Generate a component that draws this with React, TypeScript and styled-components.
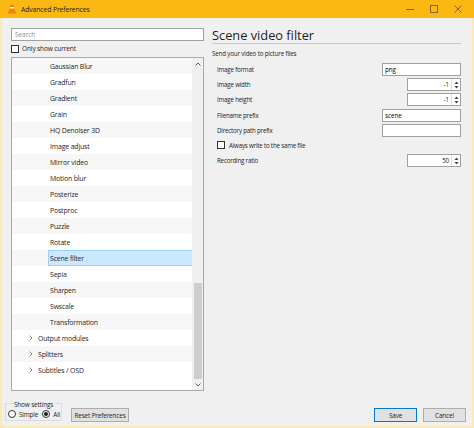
import styled, { createGlobalStyle } from "styled-components";

const GlobalStyle = createGlobalStyle`
  html, body {
    margin: 0;
    padding: 0;
    width: 474px;
    height: 428px;
    overflow: hidden;
    font-family: "Open Sans", "Noto Sans", sans-serif;
    color: #1e1e1e;
  }
`;

const filters = [
  "Gaussian Blur",
  "Gradfun",
  "Gradient",
  "Grain",
  "HQ Denoiser 3D",
  "Image adjust",
  "Mirror video",
  "Motion blur",
  "Posterize",
  "Postproc",
  "Puzzle",
  "Rotate",
  "Scene filter",
  "Sepia",
  "Sharpen",
  "Swscale",
  "Transformation",
];

const groups = ["Output modules", "Splitters", "Subtitles / OSD"];

export default function App() {
  return (
    <>
      <GlobalStyle />
      <Window>
        <TitleBar>
          <Cone />
          <TitleText>Advanced Preferences</TitleText>
          <Controls>
            <CtrlButton>
              <svg width="8" height="8" viewBox="0 0 8 8">
                <path d="M0 4.5h8" stroke="#8a6420" strokeWidth="1" />
              </svg>
            </CtrlButton>
            <CtrlButton>
              <svg width="8" height="8" viewBox="0 0 8 8">
                <rect x="0.5" y="0.5" width="7" height="7" fill="none" stroke="#8a6420" />
              </svg>
            </CtrlButton>
            <CtrlButton>
              <svg width="8" height="8" viewBox="0 0 8 8">
                <path d="M0.5 0.5l7 7M7.5 0.5l-7 7" stroke="#8a6420" strokeWidth="1" />
              </svg>
            </CtrlButton>
          </Controls>
        </TitleBar>

        <Body>
          <LeftPane>
            <Search placeholder="Search" />
            <CheckRow>
              <Check />
              <span>Only show current</span>
            </CheckRow>
            <Tree>
              <Rows>
                {filters.map((f, i) => (
                  <Row key={f} $odd={i % 2 === 1}>
                    <Item $depth={2} $selected={f === "Scene filter"}>
                      {f}
                    </Item>
                  </Row>
                ))}
                {groups.map((g, i) => (
                  <Row key={g} $odd={(filters.length + i) % 2 === 1}>
                    <Item $depth={1}>
                      <Arrow>
                        <svg width="4" height="6" viewBox="0 0 4 6">
                          <path d="M0.5 0.5L3 3L0.5 5.5" fill="none" stroke="#8c8c8c" />
                        </svg>
                      </Arrow>
                      {g}
                    </Item>
                  </Row>
                ))}
              </Rows>
              <ScrollBar>
                <ScrollArrow>
                  <svg width="6" height="4" viewBox="0 0 6 4">
                    <path d="M0.5 3.5L3 1L5.5 3.5" fill="none" stroke="#606060" />
                  </svg>
                </ScrollArrow>
                <Track>
                  <Thumb />
                </Track>
                <ScrollArrow>
                  <svg width="6" height="4" viewBox="0 0 6 4">
                    <path d="M0.5 0.5L3 3L5.5 0.5" fill="none" stroke="#606060" />
                  </svg>
                </ScrollArrow>
              </ScrollBar>
            </Tree>
          </LeftPane>

          <RightPane>
            <Heading>Scene video filter</Heading>
            <Rule />
            <Desc>Send your video to picture files</Desc>
            <Form>
              <FieldRow>
                <Label>Image format</Label>
                <TextField value="png" readOnly />
              </FieldRow>
              <FieldRow>
                <Label>Image width</Label>
                <Spin value="-1" />
              </FieldRow>
              <FieldRow>
                <Label>Image height</Label>
                <Spin value="-1" />
              </FieldRow>
              <FieldRow>
                <Label>Filename prefix</Label>
                <TextField value="scene" readOnly />
              </FieldRow>
              <FieldRow>
                <Label>Directory path prefix</Label>
                <TextField value="" readOnly />
              </FieldRow>
              <FieldRow>
                <CheckLabel>
                  <Check />
                  <span>Always write to the same file</span>
                </CheckLabel>
              </FieldRow>
              <FieldRow>
                <Label>Recording ratio</Label>
                <Spin value="50" />
              </FieldRow>
            </Form>
          </RightPane>
        </Body>

        <Footer>
          <Group>
            <Legend>Show settings</Legend>
            <Radio>
              <RadioDot />
              <span>Simple</span>
            </Radio>
            <Radio>
              <RadioDot $checked />
              <span>All</span>
            </Radio>
          </Group>
          <Button>Reset Preferences</Button>
          <Spacer />
          <Button $primary $wide>
            Save
          </Button>
          <Button $wide>Cancel</Button>
        </Footer>
      </Window>
    </>
  );
}

function Cone() {
  return (
    <ConeIcon width="8" height="10" viewBox="0 0 8 10">
      <path d="M3 0.5h2l2.2 7H0.8z" fill="#e8830c" />
      <path d="M2.3 3h3.4l0.5 1.6H1.8z" fill="#fff" />
      <path d="M0 7.5h8V9.5H0z" fill="#e8830c" />
    </ConeIcon>
  );
}

function Spin({ value }: { value: string }) {
  return (
    <SpinBox>
      <SpinValue>{value}</SpinValue>
      <SpinArrows>
        <svg width="5" height="10" viewBox="0 0 5 10">
          <path d="M0.5 4L2.5 1.5L4.5 4z" fill="#404040" />
          <path d="M0.5 6L2.5 8.5L4.5 6z" fill="#404040" />
        </svg>
      </SpinArrows>
    </SpinBox>
  );
}

const Window = styled.div`
  width: 474px;
  height: 428px;
  box-sizing: border-box;
  display: flex;
  flex-direction: column;
  background: #f0f0f0;
  border: 2px solid #fbeab4;
  border-top: 0;
  letter-spacing: -0.15px;
`;

const TitleBar = styled.div`
  height: 18px;
  flex-shrink: 0;
  margin: 0 -2px;
  background: #fbb812;
  display: flex;
  align-items: center;
  padding: 0 4px 0 8px;
`;

const ConeIcon = styled.svg`
  display: block;
  margin-right: 5px;
`;

const TitleText = styled.span`
  font-size: 6.9px;
  color: #1e1e1e;
  flex: 1;
`;

const Controls = styled.div`
  display: flex;
  height: 100%;
`;

const CtrlButton = styled.div`
  width: 24px;
  height: 100%;
  display: flex;
  align-items: center;
  justify-content: center;
`;

const Body = styled.div`
  flex: 1;
  display: flex;
  padding: 10px 0 0 9px;
  gap: 8px;
  min-height: 0;
`;

const LeftPane = styled.div`
  width: 193px;
  display: flex;
  flex-direction: column;
  padding-bottom: 5px;
`;

const Search = styled.input`
  box-sizing: border-box;
  height: 13px;
  width: 100%;
  border: 1px solid #a0a0a0;
  background: #fff;
  font: 6.4px "Open Sans", sans-serif;
  padding: 0 3px;
  outline: none;
  &::placeholder {
    color: #8c8c8c;
  }
`;

const CheckRow = styled.label`
  display: flex;
  align-items: center;
  gap: 3px;
  height: 15px;
  font-size: 6.6px;
`;

const Check = styled.span`
  display: inline-block;
  box-sizing: border-box;
  width: 8px;
  height: 8px;
  border: 1px solid #333;
  background: #fff;
  flex-shrink: 0;
`;

const Tree = styled.div`
  flex: 1;
  display: flex;
  border: 1px solid #a9a9a9;
  background: #fff;
  min-height: 0;
  margin-top: 1px;
  overflow: hidden;
`;

const Rows = styled.div`
  flex: 1;
  display: flex;
  flex-direction: column;
`;

const Row = styled.div<{ $odd: boolean }>`
  height: 16px;
  flex-shrink: 0;
  display: flex;
  background: ${(p) => (p.$odd ? "#fff" : "#f7f7f7")};
`;

const Item = styled.div<{ $depth: number; $selected?: boolean }>`
  flex: 1;
  display: flex;
  align-items: center;
  box-sizing: border-box;
  margin-left: ${(p) => (p.$depth === 2 ? 36 : 16)}px;
  padding-left: ${(p) => (p.$depth === 2 ? 1 : 0)}px;
  font-size: 6.9px;
  color: #1e1e1e;
  background: ${(p) => (p.$selected ? "#cce8ff" : "transparent")};
  border: 1px solid ${(p) => (p.$selected ? "#99d1ff" : "transparent")};
  border-right: 0;
`;

const Arrow = styled.span`
  width: 9px;
  display: flex;
  align-items: center;
`;

const ScrollBar = styled.div`
  width: 11px;
  display: flex;
  flex-direction: column;
  background: #f0f0f0;
`;

const ScrollArrow = styled.div`
  height: 11px;
  display: flex;
  align-items: center;
  justify-content: center;
`;

const Track = styled.div`
  flex: 1;
  display: flex;
  flex-direction: column;
  justify-content: flex-end;
  padding: 0 1.5px;
`;

const Thumb = styled.div`
  height: 96px;
  background: #cdcdcd;
`;

const RightPane = styled.div`
  flex: 1;
  padding-right: 11px;
  display: flex;
  flex-direction: column;
`;

const Heading = styled.div`
  font-size: 12.8px;
  line-height: 14px;
  letter-spacing: 0;
  color: #1e1e1e;
`;

const Rule = styled.div`
  height: 1px;
  background: #c8c8c8;
  margin: 1px 0 5px;
`;

const Desc = styled.div`
  font-size: 6.2px;
  line-height: 9px;
`;

const Form = styled.div`
  display: flex;
  flex-direction: column;
  gap: 2.2px;
  padding: 5px 0 0 5px;
`;

const FieldRow = styled.div`
  height: 13px;
  display: flex;
  align-items: center;
  justify-content: space-between;
`;

const Label = styled.span`
  font-size: 6.2px;
  letter-spacing: -0.2px;
`;

const CheckLabel = styled.label`
  display: flex;
  align-items: center;
  gap: 4px;
  font-size: 6.2px;
  letter-spacing: -0.2px;
`;

const TextField = styled.input`
  box-sizing: border-box;
  width: 79px;
  height: 13px;
  border: 1px solid #a0a0a0;
  background: #fff;
  font: 6.2px "Open Sans", sans-serif;
  padding: 0 2px;
  outline: none;
`;

const SpinBox = styled.div`
  box-sizing: border-box;
  width: 54px;
  height: 13px;
  border: 1px solid #a0a0a0;
  background: #fff;
  display: flex;
`;

const SpinValue = styled.span`
  flex: 1;
  text-align: right;
  font-size: 6.2px;
  line-height: 11px;
  padding-right: 2px;
`;

const SpinArrows = styled.span`
  width: 8px;
  display: flex;
  align-items: center;
  justify-content: center;
  border-left: 1px solid #e0e0e0;
`;

const Footer = styled.div`
  height: 30px;
  flex-shrink: 0;
  box-sizing: border-box;
  display: flex;
  align-items: flex-start;
  padding: 0 6px 0 3px;
  gap: 6px;
`;

const Group = styled.div`
  position: relative;
  margin-top: 7px;
  width: 57px;
  height: 18px;
  box-sizing: border-box;
  border: 1px solid #dcdcdc;
  display: flex;
  align-items: center;
  gap: 4px;
  padding: 4px 0 0 2px;
  margin-right: 3px;
`;

const Legend = styled.span`
  position: absolute;
  top: -4px;
  left: 7px;
  padding: 0 1px;
  background: #f0f0f0;
  font-size: 6.4px;
  line-height: 9px;
`;

const Radio = styled.label`
  display: flex;
  align-items: center;
  gap: 3px;
  font-size: 6.4px;
`;

const RadioDot = styled.span<{ $checked?: boolean }>`
  box-sizing: border-box;
  width: 8px;
  height: 8px;
  border-radius: 50%;
  border: 1px solid #333;
  background: #fff;
  display: flex;
  align-items: center;
  justify-content: center;
  &::after {
    content: "";
    width: 4px;
    height: 4px;
    border-radius: 50%;
    background: ${(p) => (p.$checked ? "#1e1e1e" : "transparent")};
  }
`;

const Spacer = styled.div`
  flex: 1;
`;

const Button = styled.button<{ $primary?: boolean; $wide?: boolean }>`
  margin-top: 12px;
  height: 14px;
  width: ${(p) => (p.$wide ? "43px" : "58px")};
  padding: 0;
  box-sizing: border-box;
  background: #e1e1e1;
  border: 1px solid ${(p) => (p.$primary ? "#0078d7" : "#adadad")};
  font: 6.4px "Open Sans", sans-serif;
  letter-spacing: -0.15px;
  color: #1e1e1e;
`;
